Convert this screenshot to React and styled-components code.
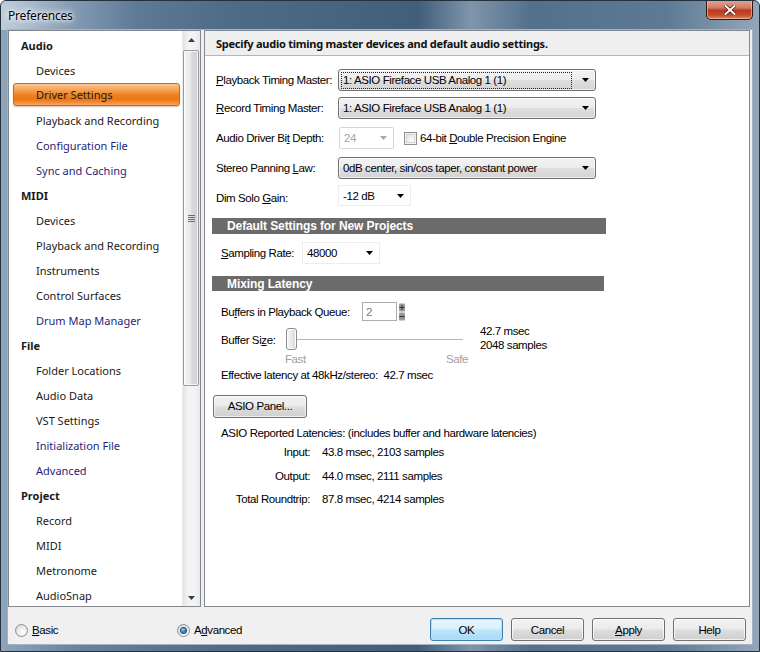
import React from 'react';
import styled, { createGlobalStyle, css } from 'styled-components';

const FORM = `"Liberation Sans", Arial, sans-serif`;
const UI = `"Noto Sans", "Open Sans", sans-serif`;

const Global = createGlobalStyle`
  html, body { margin: 0; padding: 0; }
  body { width: 760px; height: 652px; overflow: hidden; font-family: ${UI}; }
`;

const Win = styled.div`
  box-sizing: border-box;
  width: 760px;
  height: 652px;
  display: flex;
  flex-direction: column;
  border: 1px solid #24323f;
  border-radius: 6px 6px 0 0;
  background:
    linear-gradient(90deg, #8ea5bb 0%, #6883a0 10%, #4e6b88 30%, #415e7b 55%, #7f95aa 62%, #52708c 70%, #5e7a95 88%, #93a7b9 100%);
  position: relative;
  overflow: hidden;
`;

const TitleBar = styled.div`
  height: 29px;
  display: flex;
  align-items: center;
  padding-left: 7px;
  background: linear-gradient(90deg, rgba(230, 238, 245, 0.55) 0%, rgba(230, 238, 245, 0.25) 8%, rgba(255, 255, 255, 0) 18%);
`;

const Title = styled.span`
  font: 12px ${UI};
  letter-spacing: -0.2px;
  color: #000;
  text-shadow: 0 0 6px #fff, 0 0 10px #fff, 0 0 3px #fff;
  margin-top: -1px;
`;

const CloseBtn = styled.div`
  position: absolute;
  top: -1px;
  right: 6px;
  width: 47px;
  height: 20px;
  box-sizing: border-box;
  border: 1px solid #3b1510;
  border-top: none;
  border-radius: 0 0 5px 5px;
  background: linear-gradient(#e3a797 0%, #d27c66 40%, #b83a24 55%, #c94d2c 80%, #e08a62 100%);
  box-shadow: inset 0 0 0 1px rgba(255, 220, 210, 0.5);
  display: flex;
  align-items: center;
  justify-content: center;
`;

const Client = styled.div`
  flex: 1;
  margin: 0 7px 7px 7px;
  background: #f0f0f0;
  display: flex;
  flex-direction: column;
  box-shadow: 0 0 0 1px #a3b3c2;
`;

const Main = styled.div`
  height: 577px;
  display: flex;
  gap: 2px;
  padding-right: 2px;
`;

const Sidebar = styled.div`
  width: 193px;
  box-sizing: border-box;
  border: 1px solid #828790;
  background: #fff;
  display: flex;
  overflow: hidden;
`;

const NavList = styled.div`
  flex: 1;
  padding-top: 2px;
  display: flex;
  flex-direction: column;
  overflow: hidden;
`;

const NavRow = styled.div`
  height: 25px;
  flex-shrink: 0;
  display: flex;
  align-items: flex-start;
  font: 11px ${UI};
  color: #1a1a1a;
  ${p => p.$kind === 'h' && css`
    font-weight: 700;
    padding-left: 12px;
    align-items: center;
  `}
  ${p => p.$kind !== 'h' && css`
    padding-left: 4px;
    padding-right: 2px;
  `}
  ${p => p.$link && css`color: #1f1f7a;`}
`;

const NavItem = styled.div`
  box-sizing: border-box;
  height: 23px;
  flex: 1;
  display: flex;
  align-items: center;
  padding-left: 23px;
  margin-top: 1px;
  border-radius: 3px;
  ${p => p.$selected && css`
    margin-top: 0;
    border: 1px solid #c36d1c;
    padding-left: 22px;
    background: linear-gradient(#fbc592 0%, #f6a050 30%, #ef7f1d 55%, #ec7717 75%, #f5a462 100%);
    box-shadow: 0 1px 1px rgba(120, 60, 10, 0.3);
  `}
`;

const Scrollbar = styled.div`
  width: 17px;
  display: flex;
  flex-direction: column;
  background: linear-gradient(90deg, #e3e3e3, #f3f3f3 30%, #f3f3f3 70%, #e8e8e8);
  border-left: 1px solid #ececec;
`;

const ScrollArrow = styled.div`
  height: 17px;
  display: flex;
  align-items: center;
  justify-content: center;
`;

const ScrollTrack = styled.div`
  flex: 1;
  display: flex;
  flex-direction: column;
  padding-top: 2px;
`;

const ScrollThumb = styled.div`
  height: 336px;
  margin: 0 1px 0 0;
  box-sizing: border-box;
  border: 1px solid #9a9a9a;
  border-radius: 2px;
  background: linear-gradient(90deg, #f4f4f4 0%, #e9e9e9 45%, #dadada 55%, #d2d2d2 100%);
  box-shadow: inset 0 0 0 1px rgba(255, 255, 255, 0.7);
  display: flex;
  align-items: center;
  justify-content: center;
`;

const Panel = styled.div`
  flex: 1;
  margin-left: 1px;
  box-sizing: border-box;
  border: 1px solid #828790;
  background: #fff;
  display: flex;
  flex-direction: column;
`;

const PanelHeader = styled.div`
  height: 25px;
  box-sizing: border-box;
  background: #efefef;
  border-bottom: 1px solid #b4b4b4;
  display: flex;
  align-items: center;
  padding-left: 11px;
  font: 700 11px ${UI};
  letter-spacing: -0.25px;
  color: #111;
`;

const Form = styled.div`
  display: flex;
  flex-direction: column;
  padding-left: 11px;
  font: 11.5px ${FORM};
  letter-spacing: -0.4px;
  color: #000;
`;

const Row = styled.div`
  display: flex;
  align-items: center;
  height: ${p => p.$h || 22}px;
  margin-top: ${p => p.$mt || 0}px;
  margin-left: ${p => p.$ml || 0}px;
  flex-shrink: 0;
`;

const Label = styled.span`
  width: ${p => p.$w}px;
  flex-shrink: 0;
  white-space: nowrap;
  ${p => p.$dy && css`margin-top: ${p.$dy}px;`}
  ${p => p.$right && css`text-align: right;`}
`;

const Value = styled.span`
  margin-left: 12px;
  white-space: nowrap;
`;

const U = styled.span`
  text-decoration: underline;
  text-underline-offset: 1px;
`;

const Combo = styled.div`
  box-sizing: border-box;
  width: ${p => p.$w}px;
  height: ${p => p.$h || 22}px;
  display: flex;
  align-items: center;
  justify-content: space-between;
  padding: 0 6px 0 2px;
  flex-shrink: 0;
  ${p => p.$variant === 'button' && css`
    border: 1px solid #707070;
    border-radius: 3px;
    background: linear-gradient(#f3f3f3 0%, #ececec 48%, #dfdfdf 52%, #d3d3d3 100%);
    box-shadow: inset 0 0 0 1px rgba(255, 255, 255, 0.6);
  `}
  ${p => p.$variant === 'disabled' && css`
    border: 1px solid #d6d6d6;
    border-radius: 2px;
    background: #fff;
    color: #a3a3a3;
  `}
  ${p => p.$variant === 'flat' && css`
    border: 1px solid #ececec;
    background: #fff;
  `}
`;

const ComboText = styled.span`
  flex: 1;
  white-space: nowrap;
  padding: 1px 2px;
  ${p => p.$focus && css`
    outline: 1px dotted #222;
    outline-offset: -1px;
    margin-right: 10px;
    padding: 2px 2px 3px 2px;
  `}
`;

const Check = styled.span`
  width: 13px;
  height: 13px;
  box-sizing: border-box;
  border: 1px solid #8f8f8f;
  background: linear-gradient(135deg, #dcdcdc, #f6f6f6 60%, #ffffff);
  box-shadow: inset 0 0 0 1px #f3f3f3, inset 0 0 0 2px #d3d3d3;
  margin: 0 3px 0 10px;
  flex-shrink: 0;
`;

const SectionBar = styled.div`
  width: ${p => p.$w}px;
  height: ${p => p.$h}px;
  margin-top: ${p => p.$mt}px;
  margin-left: -4px;
  background: #6b6b6b;
  color: #fff;
  font: 700 12px ${FORM};
  letter-spacing: -0.1px;
  display: flex;
  align-items: center;
  padding-left: 15px;
  box-sizing: border-box;
  flex-shrink: 0;
`;

const SpinBox = styled.div`
  width: 35px;
  height: 19px;
  box-sizing: border-box;
  border: 1px solid #abadb3;
  color: #7a7a7a;
  display: flex;
  align-items: center;
  padding-left: 3px;
  background: #fff;
`;

const Slider = styled.div`
  width: 190px;
  height: 23px;
  position: relative;
  display: flex;
  align-items: center;
  margin-left: 3px;
`;

const Track = styled.div`
  margin-left: 4px;
  width: 173px;
  height: 1px;
  background: #b7b7b7;
  border-bottom: 1px solid #fff;
`;

const Thumb = styled.div`
  position: absolute;
  left: 0;
  top: 0;
  width: 11px;
  height: 22px;
  box-sizing: border-box;
  border: 1px solid #8c8c8c;
  border-radius: 3px;
  background: linear-gradient(90deg, #f7f7f7, #e8e8e8 50%, #d8d8d8);
  box-shadow: inset 0 0 0 1px #fff;
`;

const Stack = styled.div`
  display: flex;
  flex-direction: column;
  line-height: 14px;
  margin-left: 4px;
  margin-top: -3px;
`;

const Scale = styled.div`
  display: flex;
  justify-content: space-between;
  width: 183px;
  margin-left: 64px;
  color: #a0a0a0;
`;

const WinButton = styled.div`
  box-sizing: border-box;
  width: ${p => p.$w || 73}px;
  height: 23px;
  display: flex;
  align-items: center;
  justify-content: center;
  border: 1px solid #707070;
  border-radius: 3px;
  font: 11.5px ${FORM};
  letter-spacing: -0.4px;
  color: #000;
  background: linear-gradient(#f2f2f2 0%, #ebebeb 48%, #dddddd 52%, #cfcfcf 100%);
  box-shadow: inset 0 0 0 1px rgba(255, 255, 255, 0.7);
  flex-shrink: 0;
  ${p => p.$default && css`
    border-color: #3c7fb1;
    background: linear-gradient(#eaf6fd 0%, #d9f0fc 48%, #bee6fd 52%, #a7d9f5 100%);
    box-shadow: inset 0 0 0 1px #b5dff7;
  `}
`;

const Bottom = styled.div`
  flex: 1;
  display: flex;
  align-items: flex-start;
  padding: 11px 6px 0 7px;
  font: 11.5px ${FORM};
  letter-spacing: -0.4px;
`;

const RadioGroup = styled.div`
  width: ${p => p.$w}px;
  height: 23px;
  display: flex;
  align-items: center;
  flex-shrink: 0;
`;

const RadioLabel = styled.span`
  margin-left: 4px;
  white-space: nowrap;
`;

const Radio = styled.span`
  width: 13px;
  height: 13px;
  box-sizing: border-box;
  border-radius: 50%;
  border: 1px solid #8e8f8f;
  background: radial-gradient(circle at 60% 65%, #ffffff, #e8e8e8 55%, #c8c8c8);
  display: flex;
  align-items: center;
  justify-content: center;
  margin-top: 2px;
  flex-shrink: 0;
  ${p => p.$checked && css`
    &::after {
      content: '';
      width: 5px;
      height: 5px;
      border-radius: 50%;
      background: radial-gradient(circle at 40% 35%, #8ad0f5, #1a5f9c 70%, #123f6d);
      box-shadow: 0 0 0 1px #1d4f7d;
    }
  `}
`;

const Spacer = styled.div`
  flex: 1;
`;

const ButtonRow = styled.div`
  display: flex;
  gap: 8px;
`;

const Arrow = ({ color = '#000' }) => (
  <svg width="7" height="4" viewBox="0 0 7 4" style={{ flexShrink: 0 }}>
    <path d="M0 0H7L3.5 4Z" fill={color} />
  </svg>
);

const nav = [
  ['h', 'Audio'], ['i', 'Devices'], ['i', 'Driver Settings', 'sel'], ['i', 'Playback and Recording'],
  ['l', 'Configuration File'], ['l', 'Sync and Caching'],
  ['h', 'MIDI'], ['i', 'Devices'], ['i', 'Playback and Recording'], ['i', 'Instruments'],
  ['i', 'Control Surfaces'], ['l', 'Drum Map Manager'],
  ['h', 'File'], ['i', 'Folder Locations'], ['i', 'Audio Data'], ['i', 'VST Settings'],
  ['l', 'Initialization File'], ['l', 'Advanced'],
  ['h', 'Project'], ['i', 'Record'], ['i', 'MIDI'], ['i', 'Metronome'], ['i', 'AudioSnap'],
];

export default function App() {
  return (
    <>
      <Global />
      <Win>
        <TitleBar>
          <Title>Preferences</Title>
        </TitleBar>
        <CloseBtn>
          <svg width="12" height="10" viewBox="0 0 12 10">
            <path d="M1.5 1L10.5 9M10.5 1L1.5 9" stroke="#4a1208" strokeWidth="3.4" strokeLinecap="square" />
            <path d="M1.5 1L10.5 9M10.5 1L1.5 9" stroke="#fff" strokeWidth="2" strokeLinecap="square" />
          </svg>
        </CloseBtn>
        <Client>
          <Main>
            <Sidebar>
              <NavList>
                {nav.map(([k, t, s], i) => (
                  <NavRow key={i} $kind={k === 'h' ? 'h' : 'i'} $link={k === 'l'}>
                    {k === 'h' ? t : <NavItem $selected={s === 'sel'}>{t}</NavItem>}
                  </NavRow>
                ))}
              </NavList>
              <Scrollbar>
                <ScrollArrow>
                  <svg width="7" height="4" viewBox="0 0 7 4"><path d="M0 4H7L3.5 0Z" fill="#3c3c3c" /></svg>
                </ScrollArrow>
                <ScrollTrack>
                  <ScrollThumb>
                    <svg width="7" height="7" viewBox="0 0 7 7">
                      <path d="M0 0.5H7M0 2.5H7M0 4.5H7M0 6.5H7" stroke="#6d6d6d" strokeWidth="1" />
                    </svg>
                  </ScrollThumb>
                </ScrollTrack>
                <ScrollArrow>
                  <svg width="7" height="4" viewBox="0 0 7 4"><path d="M0 0H7L3.5 4Z" fill="#3c3c3c" /></svg>
                </ScrollArrow>
              </Scrollbar>
            </Sidebar>
            <Panel>
              <PanelHeader>Specify audio timing master devices and default audio settings.</PanelHeader>
              <Form>
                <Row $mt={13}>
                  <Label $w={122}><U>P</U>layback Timing Master:</Label>
                  <Combo $w={258} $variant="button">
                    <ComboText $focus>1: ASIO Fireface USB Analog 1 (1)</ComboText>
                    <Arrow />
                  </Combo>
                </Row>
                <Row $mt={6}>
                  <Label $w={122}><U>R</U>ecord Timing Master:</Label>
                  <Combo $w={258} $variant="button">
                    <ComboText>1: ASIO Fireface USB Analog 1 (1)</ComboText>
                    <Arrow />
                  </Combo>
                </Row>
                <Row $mt={8}>
                  <Label $w={123}>Audio Driver Bi<U>t</U> Depth:</Label>
                  <Combo $w={55} $variant="disabled">
                    <ComboText>24</ComboText>
                    <Arrow color="#a8a8a8" />
                  </Combo>
                  <Check />
                  <span>64-bit <U>D</U>ouble Precision Engine</span>
                </Row>
                <Row $mt={8}>
                  <Label $w={122}>Stereo Panning <U>L</U>aw:</Label>
                  <Combo $w={258} $variant="button">
                    <ComboText>0dB center, sin/cos taper, constant power</ComboText>
                    <Arrow />
                  </Combo>
                </Row>
                <Row $mt={6} $h={21}>
                  <Label $w={122} $dy={4}>Dim Solo <U>G</U>ain:</Label>
                  <Combo $w={73} $h={21} $variant="flat">
                    <ComboText>-12 dB</ComboText>
                    <Arrow />
                  </Combo>
                </Row>
                <SectionBar $w={394} $h={16} $mt={12}>Default Settings for New Projects</SectionBar>
                <Row $mt={8} $ml={5}>
                  <Label $w={81}><U>S</U>ampling Rate:</Label>
                  <Combo $w={78} $variant="flat">
                    <ComboText>48000</ComboText>
                    <Arrow />
                  </Combo>
                </Row>
                <SectionBar $w={392} $h={15} $mt={12}>Mixing Latency</SectionBar>
                <Row $mt={11} $h={19} $ml={5}>
                  <Label $w={141}>Bu<U>f</U>fers in Playback Queue:</Label>
                  <SpinBox>2</SpinBox>
                  <svg width="8" height="18" viewBox="0 0 8 18" style={{ marginLeft: 1 }}>
                    <rect x="1" y="0.5" width="6" height="8" rx="1" fill="#9a9a9a" />
                    <path d="M4 2V7M1.5 4.5H6.5" stroke="#3a3a3a" strokeWidth="1.2" />
                    <rect x="1" y="9.5" width="6" height="8" rx="1" fill="#9a9a9a" />
                    <path d="M1.5 13.5H6.5" stroke="#3a3a3a" strokeWidth="1.2" />
                  </svg>
                </Row>
                <Row $mt={7} $h={23} $ml={5}>
                  <Label $w={62}>Buffer Si<U>z</U>e:</Label>
                  <Slider>
                    <Track />
                    <Thumb />
                  </Slider>
                  <Stack>
                    <span>42.7 msec</span>
                    <span>2048 samples</span>
                  </Stack>
                </Row>
                <Row $mt={1} $h={14} $ml={5}>
                  <Scale><span>Fast</span><span>Safe</span></Scale>
                </Row>
                <Row $mt={2} $h={14} $ml={5}>
                  <span>Effective latency at 48kHz/stereo:&nbsp;&nbsp;42.7 msec</span>
                </Row>
                <Row $mt={13} $ml={-3}>
                  <WinButton $w={94}>ASIO Panel...</WinButton>
                </Row>
                <Row $mt={9} $h={14} $ml={5}>
                  <span>ASIO Reported Latencies: (includes buffer and hardware latencies)</span>
                </Row>
                <Row $mt={5} $h={14} $ml={5}>
                  <Label $w={89} $right>Input:</Label>
                  <Value>43.8 msec, 2103 samples</Value>
                </Row>
                <Row $mt={10} $h={14} $ml={5}>
                  <Label $w={89} $right>Output:</Label>
                  <Value>44.0 msec, 2111 samples</Value>
                </Row>
                <Row $mt={9} $h={14} $ml={5}>
                  <Label $w={89} $right>Total Roundtrip:</Label>
                  <Value>87.8 msec, 4214 samples</Value>
                </Row>
              </Form>
            </Panel>
          </Main>
          <Bottom>
            <RadioGroup $w={162}>
              <Radio />
              <RadioLabel><U>B</U>asic</RadioLabel>
            </RadioGroup>
            <RadioGroup $w={120}>
              <Radio $checked />
              <RadioLabel>A<U>d</U>vanced</RadioLabel>
            </RadioGroup>
            <Spacer />
            <ButtonRow>
              <WinButton $default>OK</WinButton>
              <WinButton>Cancel</WinButton>
              <WinButton><U>A</U>pply</WinButton>
              <WinButton>Help</WinButton>
            </ButtonRow>
          </Bottom>
        </Client>
      </Win>
    </>
  );
}
